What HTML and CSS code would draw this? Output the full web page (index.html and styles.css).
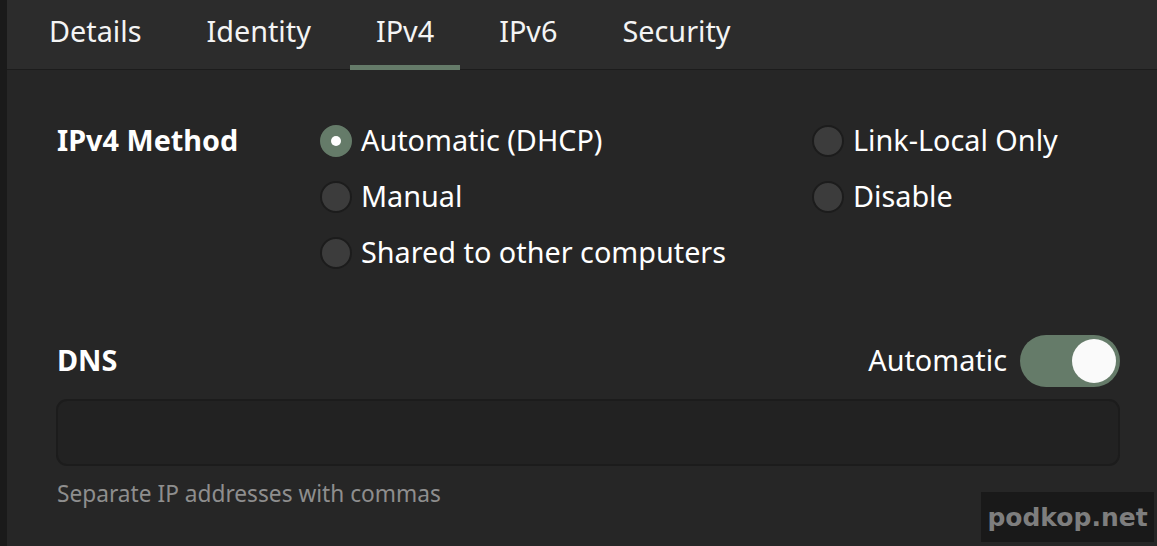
FILE: index.html
```html
<!DOCTYPE html>
<html lang="en">
<head>
<meta charset="utf-8">
<title>IPv4</title>
<link rel="stylesheet" href="styles.css">
</head>
<body>
<div class="window">
  <div class="edge"></div>
  <div class="main">
    <nav class="tabs">
      <div class="tab">Details</div>
      <div class="tab">Identity</div>
      <div class="tab active">IPv4</div>
      <div class="tab">IPv6</div>
      <div class="tab">Security</div>
    </nav>
    <div class="content">
      <div class="method">
        <div class="label">IPv4 Method</div>
        <div class="radio checked"><span class="dot"></span><span class="txt">Automatic (DHCP)</span></div>
        <div class="radio"><span class="dot"></span><span class="txt">Link-Local Only</span></div>
        <div></div>
        <div class="radio"><span class="dot"></span><span class="txt">Manual</span></div>
        <div class="radio"><span class="dot"></span><span class="txt">Disable</span></div>
        <div></div>
        <div class="radio"><span class="dot"></span><span class="txt">Shared to other computers</span></div>
        <div></div>
      </div>
      <div class="dns-head">
        <div class="label">DNS</div>
        <div class="auto">
          <span class="txt">Automatic</span>
          <div class="switch on"><span class="knob"></span></div>
        </div>
      </div>
      <div class="entry"></div>
      <div class="hint">Separate IP addresses with commas</div>
    </div>
  </div>
  <div class="watermark">podkop.net</div>
</div>
</body>
</html>
```
FILE: styles.css
```css
html, body {
  margin: 0;
  padding: 0;
  background: #262626;
}
body {
  font-family: "Noto Sans", "Open Sans", sans-serif;
  color: #ffffff;
  width: 1157px;
  height: 546px;
  overflow: hidden;
}
.window {
  display: flex;
  height: 546px;
  position: relative;
}
.edge {
  width: 7px;
  background: #1a1a1a;
  flex: none;
}
.main {
  flex: 1;
  display: flex;
  flex-direction: column;
  background: #262626;
}
.tabs {
  display: flex;
  height: 70px;
  gap: 13px;
  padding-left: 16px;
  background: #2c2c2c;
  box-shadow: inset 0 -1px 0 #1c1c1c;
  box-sizing: border-box;
}
.tab {
  display: flex;
  align-items: center;
  padding: 0 26px 9px;
  font-size: 28.8px;
  color: #f4f4f4;
}
.tab.active {
  box-shadow: inset 0 -5px 0 #657b69;
}
.content {
  padding: 43px 37px 0 50px;
}
.method {
  display: grid;
  grid-template-columns: 263px 492px auto;
  grid-auto-rows: 56px;
  align-items: center;
}
.label {
  font-weight: 700;
  font-size: 28.8px;
  padding-bottom: 3px;
}
.radio {
  display: flex;
  align-items: center;
  gap: 9px;
  font-size: 28.8px;
}
.txt {
  padding-bottom: 3px;
}
.dot {
  width: 28px;
  height: 28px;
  border-radius: 50%;
  background: #3c3c3c;
  border: 2px solid #1c1c1c;
  display: flex;
  align-items: center;
  justify-content: center;
  flex: none;
}
.radio.checked .dot {
  background: #657b69;
  border-color: #657b69;
}
.radio.checked .dot::after {
  content: "";
  width: 10px;
  height: 10px;
  border-radius: 50%;
  background: #ffffff;
}
.dns-head {
  margin-top: 54px;
  height: 52px;
  display: flex;
  align-items: center;
  justify-content: space-between;
}
.auto {
  display: flex;
  align-items: center;
  gap: 13px;
  font-size: 28.8px;
}
.switch {
  width: 100px;
  height: 52px;
  border-radius: 26px;
  background: #657b69;
  display: flex;
  align-items: center;
  justify-content: flex-end;
  padding-right: 4px;
  box-sizing: border-box;
}
.knob {
  width: 44px;
  height: 44px;
  border-radius: 50%;
  background: #fafafa;
}
.entry {
  margin: 12px 0 0 -1px;
  height: 67px;
  border-radius: 11px;
  background: #222222;
  border: 2px solid #1c1c1c;
  box-sizing: border-box;
}
.hint {
  margin-top: 12px;
  font-size: 22.7px;
  color: #8e8e8e;
}
.watermark {
  position: absolute;
  left: 981px;
  top: 492px;
  width: 173px;
  height: 50px;
  background: #191919;
  color: #7e7e7e;
  font-family: "DejaVu Sans", sans-serif;
  font-weight: 700;
  font-size: 25px;
  display: flex;
  align-items: center;
  justify-content: center;
}
```
